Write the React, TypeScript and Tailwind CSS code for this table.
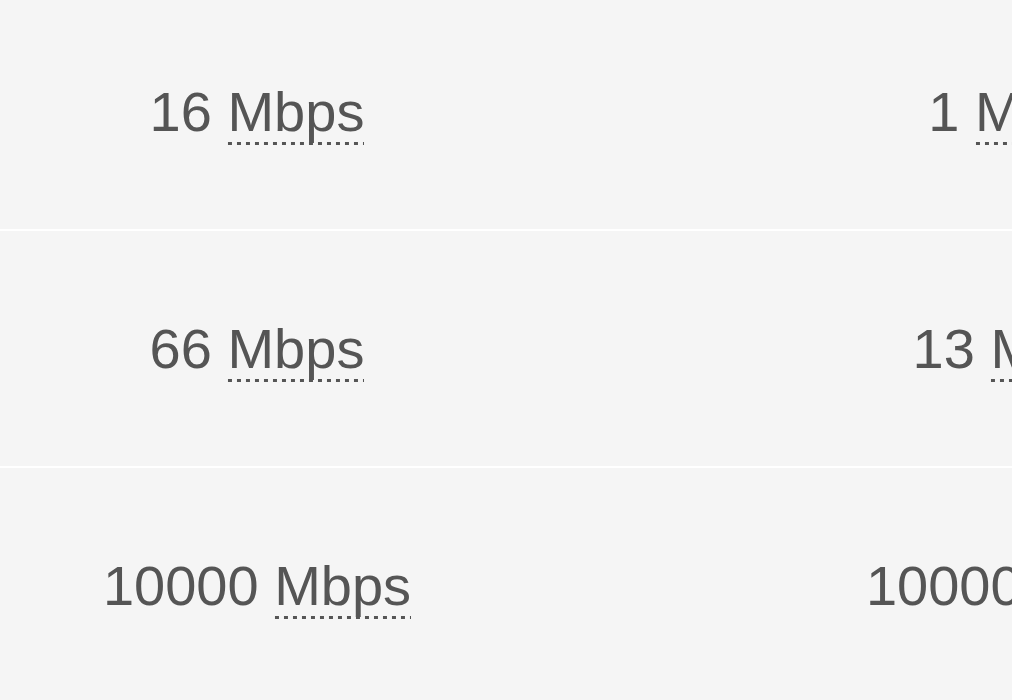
import React from "react";

const rows = [
  ["16", "1"],
  ["66", "13"],
  ["10000", "10000"],
];

function Cell({ n }: { n: string }) {
  return (
    <span className="whitespace-nowrap">
      {n}{" "}
      <span className="pb-[2px] bg-[linear-gradient(to_right,#555555_50%,transparent_50%)] bg-[length:9px_3px] bg-repeat-x bg-bottom">
        Mbps
      </span>
    </span>
  );
}

export default function App() {
  return (
    <div
      className="w-[1012px] h-[700px] overflow-hidden bg-[#f5f5f5] text-[#555555] text-[56px]"
      style={{ fontFamily: '"Liberation Sans", Arial, sans-serif' }}
    >
      <div className="-mt-[6px] flex flex-col">
        {rows.map(([a, b], i) => (
          <div key={i} className="flex h-[237px] border-b-2 border-white items-center w-[1526px]">
            <div className="w-[514px] text-center">
              <Cell n={a} />
            </div>
            <div className="w-[1012px] text-center">
              <Cell n={b} />
            </div>
          </div>
        ))}
      </div>
    </div>
  );
}
